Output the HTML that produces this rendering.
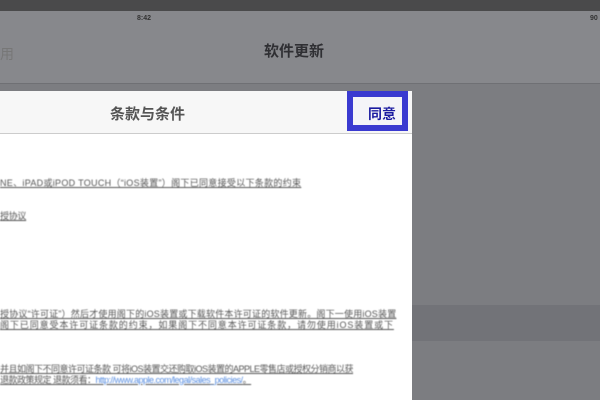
<!DOCTYPE html>
<html><head><meta charset="utf-8"><style>
*{margin:0;padding:0;box-sizing:border-box}
body{width:600px;height:400px;overflow:hidden;background:#7c7d81;position:relative;font-family:"Liberation Sans","Noto Sans CJK SC",sans-serif}
.a{position:absolute}
.t{position:absolute;font-size:9px;color:#555;text-decoration:underline;white-space:nowrap;letter-spacing:-0.3px;filter:blur(0.4px)}
</style></head><body>
<div class="a" style="left:0;top:0;width:600px;height:11px;background:#4a4a4b"></div>
<div class="a" style="left:0;top:11px;width:600px;height:72px;background:#87888c"></div>
<div class="a" style="left:0;top:83px;width:600px;height:1px;background:#6f7074"></div>
<div class="a" style="left:137px;top:15px;font-size:7px;font-weight:bold;color:#333">8:42</div>
<div class="a" style="left:590px;top:15px;font-size:7px;font-weight:bold;color:#333">90</div>
<div class="a" style="left:0;top:44px;font-size:14px;color:#777">用</div>
<div class="a" style="left:264px;top:40px;font-size:15px;font-weight:bold;color:#2f2f33">软件更新</div>
<div class="a" style="left:0;top:305px;width:600px;height:36px;background:#727378"></div>
<div class="a" style="left:0;top:91px;width:412px;height:309px;background:#fff"></div>
<div class="a" style="left:0;top:91px;width:412px;height:43px;background:#f7f7f7;border-bottom:1px solid #ccc"></div>
<div class="a" style="left:110px;top:103px;font-size:15px;font-weight:bold;color:#555">条款与条件</div>
<div class="a" style="left:347px;top:91px;width:61px;height:40px;border:6px solid #3a3ad0;background:#f4f4f8"></div>
<div class="a" style="left:368px;top:104px;font-size:14px;font-weight:bold;color:#1a1aa0">同意</div>
<div class="t" style="left:0;top:176px;letter-spacing:0.3px">NE、iPAD或iPOD TOUCH（“iOS装置”）阁下已同意接受以下条款的约束</div>
<div class="t" style="left:0;top:209px">授协议</div>
<div class="t" style="left:0;top:307px;letter-spacing:0.2px">授协议“许可证”）然后才使用阁下的iOS装置或下载软件本许可证的软件更新。阁下一使用iOS装置</div>
<div class="t" style="left:0;top:318px;letter-spacing:0.9px">阁下已同意受本许可证条款的约束，如果阁下不同意本许可证条款，请勿使用iOS装置或下</div>
<div class="t" style="left:0;top:362px;letter-spacing:-0.5px">并且如阁下不同意许可证条款 可将iOS装置交还购取iOS装置的APPLE零售店或授权分销商以获</div>
<div class="t" style="left:0;top:373px;letter-spacing:-0.5px">退款政策规定 退款须看：<span style="color:#5b8fe0">http://www.apple.com/legal/sales_policies/</span>。</div>
</body></html>
